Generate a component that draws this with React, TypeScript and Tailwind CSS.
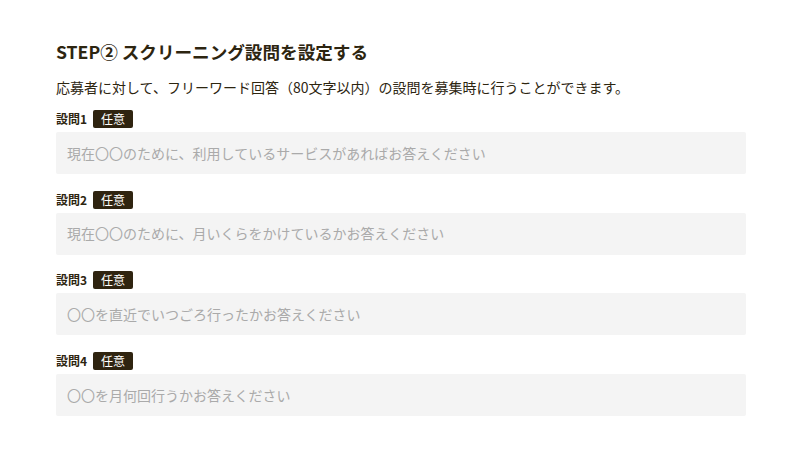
const questions = [
  "現在〇〇のために、利用しているサービスがあればお答えください",
  "現在〇〇のために、月いくらをかけているかお答えください",
  "〇〇を直近でいつごろ行ったかお答えください",
  "〇〇を月何回行うかお答えください",
];

export default function App() {
  return (
    <div
      className="w-[800px] h-[453px] bg-white px-[56px] pt-[40px]"
      style={{ fontFamily: '"Noto Sans CJK JP", "Noto Sans", sans-serif' }}
    >
      {/* Heading */}
      <h2 className="text-[17.6px] leading-[24px] font-bold text-[#2d2510]">
        STEP② スクリーニング設問を設定する
      </h2>
      <p className="mt-[11px] text-[14px] leading-[24px] text-[#2d2510]">
        応募者に対して、フリーワード回答（80文字以内）の設問を募集時に行うことができます。
      </p>

      {/* Questions */}
      <div className="mt-[11px] flex flex-col gap-[16.7px] w-[690px]">
        {questions.map((q, i) => (
          <div key={i} className="flex flex-col gap-[4px]">
            <div className="flex items-center gap-[6px] h-[18px]">
              <span className="text-[12px] font-bold text-[#2d2510]">設問{i + 1}</span>
              <span className="bg-[#2f2410] text-white text-[12px] leading-[18px] px-[8px] rounded-[2px]">
                任意
              </span>
            </div>
            <div className="h-[42px] bg-[#f4f4f4] rounded-[2px] flex items-center px-[11px]">
              <span className="text-[14px] text-[#aaaaaa]">{q}</span>
            </div>
          </div>
        ))}
      </div>
    </div>
  );
}
